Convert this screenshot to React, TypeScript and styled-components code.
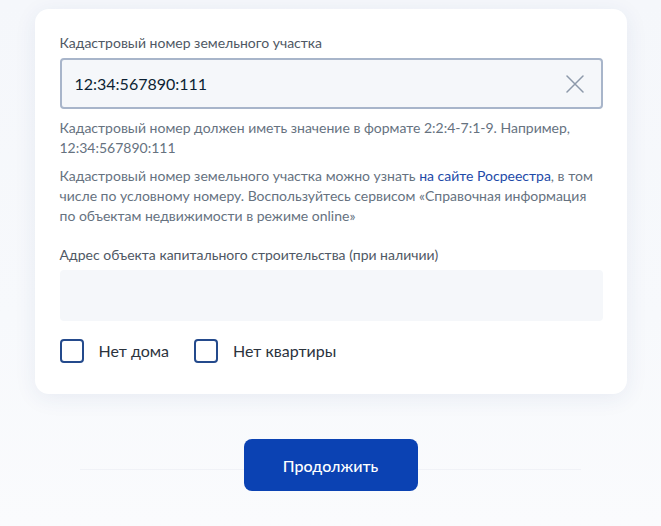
import { useState } from 'react'
import styled, { createGlobalStyle } from 'styled-components'

const GlobalStyle = createGlobalStyle`
  html, body {
    margin: 0;
    padding: 0;
    background: #f5f7fb;
  }

  body {
    font-family: Lato, 'Noto Sans', sans-serif;
    color: #0b1f33;
  }
`

const ClearIcon = () => (
  <svg width='18' height='18' viewBox='0 0 18 18' fill='none'>
    <path d='M1 1L17 17M17 1L1 17' stroke='#8d99aa' strokeWidth='1.5' strokeLinecap='round' />
  </svg>
)

const App = () => {
  const [cadastre, setCadastre] = useState('12:34:567890:111')
  const [address, setAddress] = useState('')
  const [noHouse, setNoHouse] = useState(false)
  const [noFlat, setNoFlat] = useState(false)

  return (
    <>
      <GlobalStyle />
      <Page>
        <Card>
          <Label>Кадастровый номер земельного участка</Label>
          <InputBox $bordered>
            <Input value={cadastre} onChange={(e) => setCadastre(e.target.value)} />
            <ClearButton onClick={() => setCadastre('')}>
              <ClearIcon />
            </ClearButton>
          </InputBox>

          <Hint>
            Кадастровый номер должен иметь значение в формате 2:2:4-7:1-9. Например, 12:34:567890:111
          </Hint>
          <Hint>
            Кадастровый номер земельного участка можно узнать <Link>на сайте Росреестра</Link>, в том
            числе по условному номеру. Воспользуйтесь сервисом «Справочная информация по объектам
            недвижимости в режиме online»
          </Hint>

          <Label className='spaced'>Адрес объекта капитального строительства (при наличии)</Label>
          <InputBox>
            <Input value={address} onChange={(e) => setAddress(e.target.value)} />
          </InputBox>

          <Checks>
            <Check onClick={() => setNoHouse(!noHouse)}>
              <Box $checked={noHouse} />
              Нет дома
            </Check>
            <Check onClick={() => setNoFlat(!noFlat)}>
              <Box $checked={noFlat} />
              Нет квартиры
            </Check>
          </Checks>
        </Card>

        <Footer>
          <Line />
          <Button>Продолжить</Button>
          <Line />
        </Footer>
      </Page>
    </>
  )
}

const Page = styled.div`
  min-height: 526px;
  box-sizing: border-box;
  padding-top: 9px;
  display: flex;
  flex-direction: column;
  align-items: center;
  background: linear-gradient(180deg, #f5f7fb 0%, #f7f9fc 60%, #fafbfd 100%);
`

const Card = styled.div`
  width: 592px;
  box-sizing: border-box;
  padding: 24px 24px 31px 25px;
  background: #ffffff;
  border-radius: 14px;
  box-shadow: 0 4px 22px rgba(40, 70, 130, 0.08);
  display: flex;
  flex-direction: column;

  .spaced {
    margin-top: 19px;
  }
`

const Label = styled.div`
  font-size: 14px;
  line-height: 20px;
  color: #4f5864;
  margin-bottom: 5px;
`

const InputBox = styled.div<{ $bordered?: boolean }>`
  height: 51px;
  box-sizing: border-box;
  display: flex;
  align-items: center;
  padding: 0 17px 0 13px;
  background: #f5f7fa;
  border: 2px solid ${(p) => (p.$bordered ? '#a8b5ca' : '#f5f7fa')};
  border-radius: 4px;
`

const Input = styled.input`
  flex: 1;
  min-width: 0;
  border: none;
  outline: none;
  background: transparent;
  font-family: Lato, 'Noto Sans', sans-serif;
  font-size: 16px;
  color: #0b1f33;
  padding: 0;
`

const ClearButton = styled.button`
  border: none;
  background: none;
  padding: 0;
  display: flex;
  cursor: pointer;
`

const Hint = styled.p`
  margin: 9px 0 0;
  font-size: 14px;
  line-height: 20px;
  color: #66727f;

  & + & {
    margin-top: 8px;
  }
`

const Link = styled.a`
  color: #1d4aa8;
  text-decoration: none;
  cursor: pointer;
`

const Checks = styled.div`
  margin-top: 18px;
  display: flex;
  gap: 25px;
`

const Check = styled.label`
  display: flex;
  align-items: center;
  gap: 15px;
  font-size: 16px;
  line-height: 24px;
  color: #2b333d;
  cursor: pointer;
`

const Box = styled.span<{ $checked: boolean }>`
  width: 24px;
  height: 24px;
  box-sizing: border-box;
  border: 2px solid #244a8c;
  border-radius: 4px;
  background: ${(p) => (p.$checked ? '#244a8c' : '#ffffff')};
`

const Footer = styled.div`
  width: 100%;
  box-sizing: border-box;
  margin-top: 45px;
  padding: 0 80px;
  display: flex;
  align-items: center;
`

const Line = styled.div`
  flex: 1;
  height: 1px;
  background: #f0f2f7;
  margin-top: 8px;
`

const Button = styled.button`
  width: 174px;
  height: 52px;
  border: none;
  border-radius: 8px;
  background: #0b42b3;
  color: #ffffff;
  font-family: Lato, 'Noto Sans', sans-serif;
  font-size: 16px;
  font-weight: 500;
  cursor: pointer;
`

export default App
